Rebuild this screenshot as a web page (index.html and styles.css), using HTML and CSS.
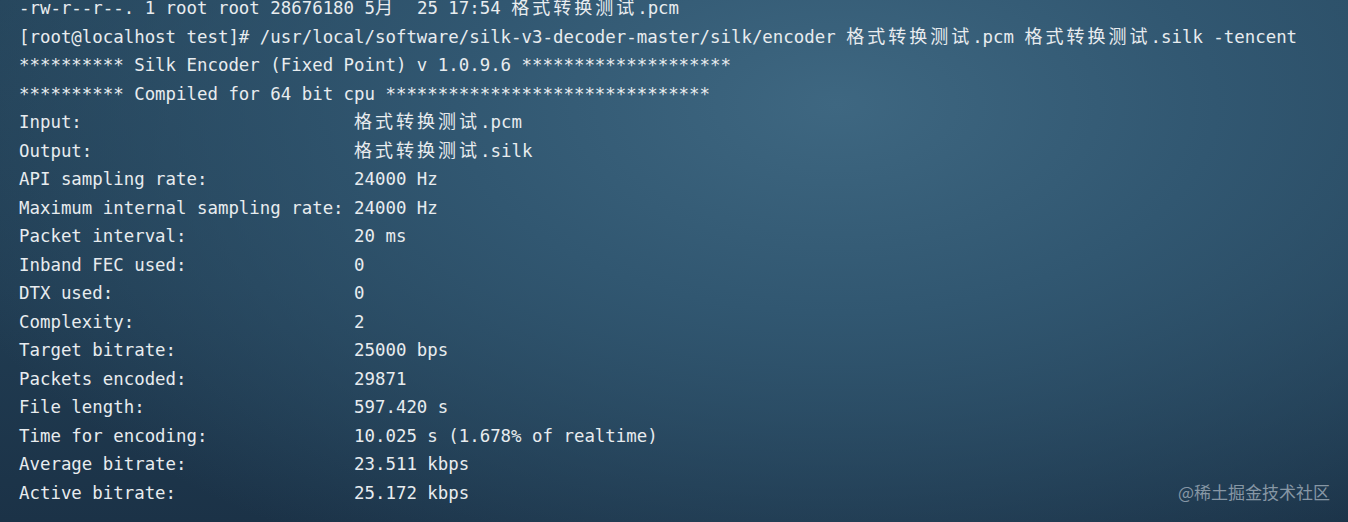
FILE: index.html
```html
<!DOCTYPE html>
<html lang="zh-CN">
<head>
    <meta charset="UTF-8">
    <meta name="viewport" content="width=device-width, initial-scale=1.0">
    <title>silk encoder</title>
    <link rel="stylesheet" href="styles.css">
</head>
<body>
    <!-- 终端输出 -->
    <pre class="terminal">-rw-r--r--. 1 root root 28676180 5<span class="cjk">月</span>  25 17:54 <span class="cjk">格式转换测试</span>.pcm
[root@localhost test]# /usr/local/software/silk-v3-decoder-master/silk/encoder <span class="cjk">格式转换测试</span>.pcm <span class="cjk">格式转换测试</span>.silk -tencent
********** Silk Encoder (Fixed Point) v 1.0.9.6 ********************
********** Compiled for 64 bit cpu *******************************
Input:                          <span class="cjk">格式转换测试</span>.pcm
Output:                         <span class="cjk">格式转换测试</span>.silk
API sampling rate:              24000 Hz
Maximum internal sampling rate: 24000 Hz
Packet interval:                20 ms
Inband FEC used:                0
DTX used:                       0
Complexity:                     2
Target bitrate:                 25000 bps
Packets encoded:                29871
File length:                    597.420 s
Time for encoding:              10.025 s (1.678% of realtime)
Average bitrate:                23.511 kbps
Active bitrate:                 25.172 kbps</pre>

    <div class="watermark">@稀土掘金技术社区</div>
</body>
</html>
```

FILE: styles.css
```css
html, body {
    height: 100%;
}

body {
    margin: 0;
    overflow: hidden;
    background:
        radial-gradient(ellipse 950px 520px at 62% 20%, #3e6781 0%, #315771 40%, transparent 100%),
        linear-gradient(180deg, #25445a 0%, #213d53 55%, #1b3247 100%);
}

.terminal {
    margin: -6px 0 0;
    padding: 0 0 0 19px;
    font-family: "DejaVu Sans Mono", "Noto Sans CJK SC", monospace;
    font-size: 17.4px;
    line-height: 28.5px;
    color: #e8ecef;
    white-space: pre;
}

.cjk {
    font-family: "Noto Sans CJK SC", sans-serif;
    font-size: 18px;
    line-height: 0;
    letter-spacing: 3px;
}

.watermark {
    position: absolute;
    right: 18px;
    bottom: 18px;
    font-family: "Noto Sans CJK SC", sans-serif;
    font-size: 17px;
    color: #8797a5;
}
```
